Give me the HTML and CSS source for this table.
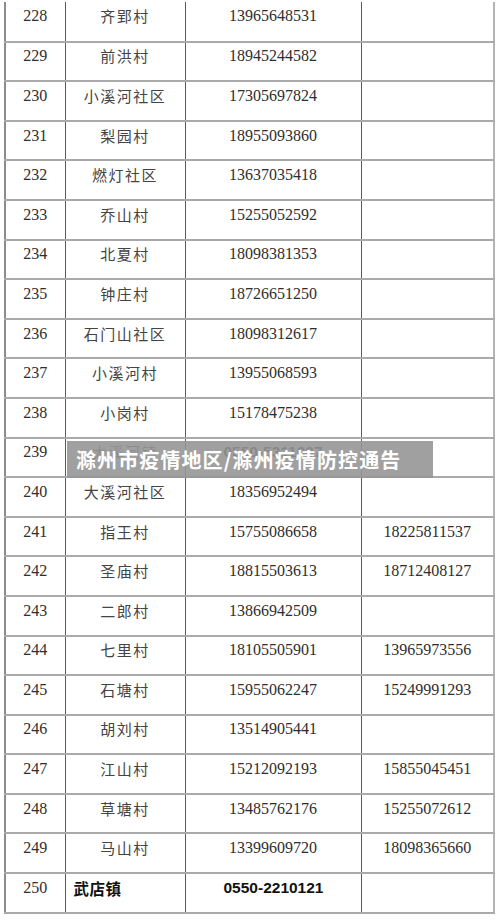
FILE: index.html
```html
<!DOCTYPE html>
<html lang="zh-CN">
<head>
<meta charset="utf-8">
<title>滁州市疫情地区/滁州疫情防控通告</title>
<link rel="stylesheet" href="styles.css">
</head>
<body>
<div class="page">
  <table class="sheet">
    <colgroup>
      <col class="c-no"><col class="c-name"><col class="c-tel"><col class="c-tel2">
    </colgroup>
    <tbody>
      <tr><td class="no">228</td><td class="name">齐郢村</td><td class="tel">13965648531</td><td class="tel2"></td></tr>
      <tr><td class="no">229</td><td class="name">前洪村</td><td class="tel">18945244582</td><td class="tel2"></td></tr>
      <tr><td class="no">230</td><td class="name">小溪河社区</td><td class="tel">17305697824</td><td class="tel2"></td></tr>
      <tr><td class="no">231</td><td class="name">梨园村</td><td class="tel">18955093860</td><td class="tel2"></td></tr>
      <tr><td class="no">232</td><td class="name">燃灯社区</td><td class="tel">13637035418</td><td class="tel2"></td></tr>
      <tr><td class="no">233</td><td class="name">乔山村</td><td class="tel">15255052592</td><td class="tel2"></td></tr>
      <tr><td class="no">234</td><td class="name">北夏村</td><td class="tel">18098381353</td><td class="tel2"></td></tr>
      <tr><td class="no">235</td><td class="name">钟庄村</td><td class="tel">18726651250</td><td class="tel2"></td></tr>
      <tr><td class="no">236</td><td class="name">石门山社区</td><td class="tel">18098312617</td><td class="tel2"></td></tr>
      <tr><td class="no">237</td><td class="name">小溪河村</td><td class="tel">13955068593</td><td class="tel2"></td></tr>
      <tr><td class="no">238</td><td class="name">小岗村</td><td class="tel">15178475238</td><td class="tel2"></td></tr>
      <tr><td class="no">239</td><td class="name">大溪河镇</td><td class="tel bold">0550-5311007</td><td class="tel2"></td></tr>
      <tr><td class="no">240</td><td class="name">大溪河社区</td><td class="tel">18356952494</td><td class="tel2"></td></tr>
      <tr><td class="no">241</td><td class="name">指王村</td><td class="tel">15755086658</td><td class="tel2">18225811537</td></tr>
      <tr><td class="no">242</td><td class="name">圣庙村</td><td class="tel">18815503613</td><td class="tel2">18712408127</td></tr>
      <tr><td class="no">243</td><td class="name">二郎村</td><td class="tel">13866942509</td><td class="tel2"></td></tr>
      <tr><td class="no">244</td><td class="name">七里村</td><td class="tel">18105505901</td><td class="tel2">13965973556</td></tr>
      <tr><td class="no">245</td><td class="name">石塘村</td><td class="tel">15955062247</td><td class="tel2">15249991293</td></tr>
      <tr><td class="no">246</td><td class="name">胡刘村</td><td class="tel">13514905441</td><td class="tel2"></td></tr>
      <tr><td class="no">247</td><td class="name">江山村</td><td class="tel">15212092193</td><td class="tel2">15855045451</td></tr>
      <tr><td class="no">248</td><td class="name">草塘村</td><td class="tel">13485762176</td><td class="tel2">15255072612</td></tr>
      <tr><td class="no">249</td><td class="name">马山村</td><td class="tel">13399609720</td><td class="tel2">18098365660</td></tr>
      <tr><td class="no">250</td><td class="name town">武店镇</td><td class="tel town-tel">0550-2210121</td><td class="tel2"></td></tr>
    </tbody>
  </table>
  <div class="banner">滁州市疫情地区/滁州疫情防控通告</div>
</div>
</body>
</html>
```
FILE: styles.css
```css
html, body {
  margin: 0;
  padding: 0;
  background: #ffffff;
}

.page {
  position: relative;
  width: 500px;
  height: 920px;
  overflow: hidden;
  padding-top: 2px;
  box-sizing: border-box;
}

.sheet {
  margin-left: 4px;
  width: 489px;
  table-layout: fixed;
  border-collapse: collapse;
  font-family: "Liberation Serif", "Noto Sans CJK SC", serif;
  font-size: 16px;
  color: #2e2e2e;
}

.c-no { width: 60px; }
.c-name { width: 120px; }
.c-tel { width: 176px; }
.c-tel2 { width: 133px; }

.sheet tr {
  height: 39.6px;
}

.sheet td {
  padding: 0 0 10px 0;
  text-align: center;
  vertical-align: middle;
  border-bottom: 2px solid #aaaaaa;
  border-left: 1px solid #5a5a5a;
  white-space: nowrap;
  line-height: 20px;
}

.sheet td.no {
  border-left: 2px solid #8c8c8c;
}

.sheet td.tel2 {
  border-right: 2px solid #b4b4b4;
}

.name {
  font-family: "Noto Sans CJK SC", sans-serif;
  font-weight: 400;
  letter-spacing: 1.5px;
  color: #444444;
  font-size: 15px;
}

.bold {
  font-family: "Liberation Sans", sans-serif;
  font-weight: 700;
  font-size: 15.5px;
  color: #111;
}

.name.town {
  text-align: left;
  padding-left: 8px;
  font-weight: 700;
  font-size: 15.5px;
  color: #111111;
  letter-spacing: 0.5px;
}

.tel.town-tel {
  text-align: left;
  padding-left: 38px;
  font-family: "Liberation Sans", sans-serif;
  font-weight: 700;
  font-size: 15.5px;
  color: #111111;
}

.banner {
  position: absolute;
  left: 67px;
  top: 441px;
  width: 366px;
  height: 37px;
  box-sizing: border-box;
  padding-left: 9px;
  background: rgba(150, 150, 150, 0.9);
  color: #ffffff;
  font-family: "Noto Sans CJK SC", sans-serif;
  font-weight: 700;
  font-size: 20px;
  line-height: 37px;
  letter-spacing: 1.1px;
  white-space: nowrap;
}
```
